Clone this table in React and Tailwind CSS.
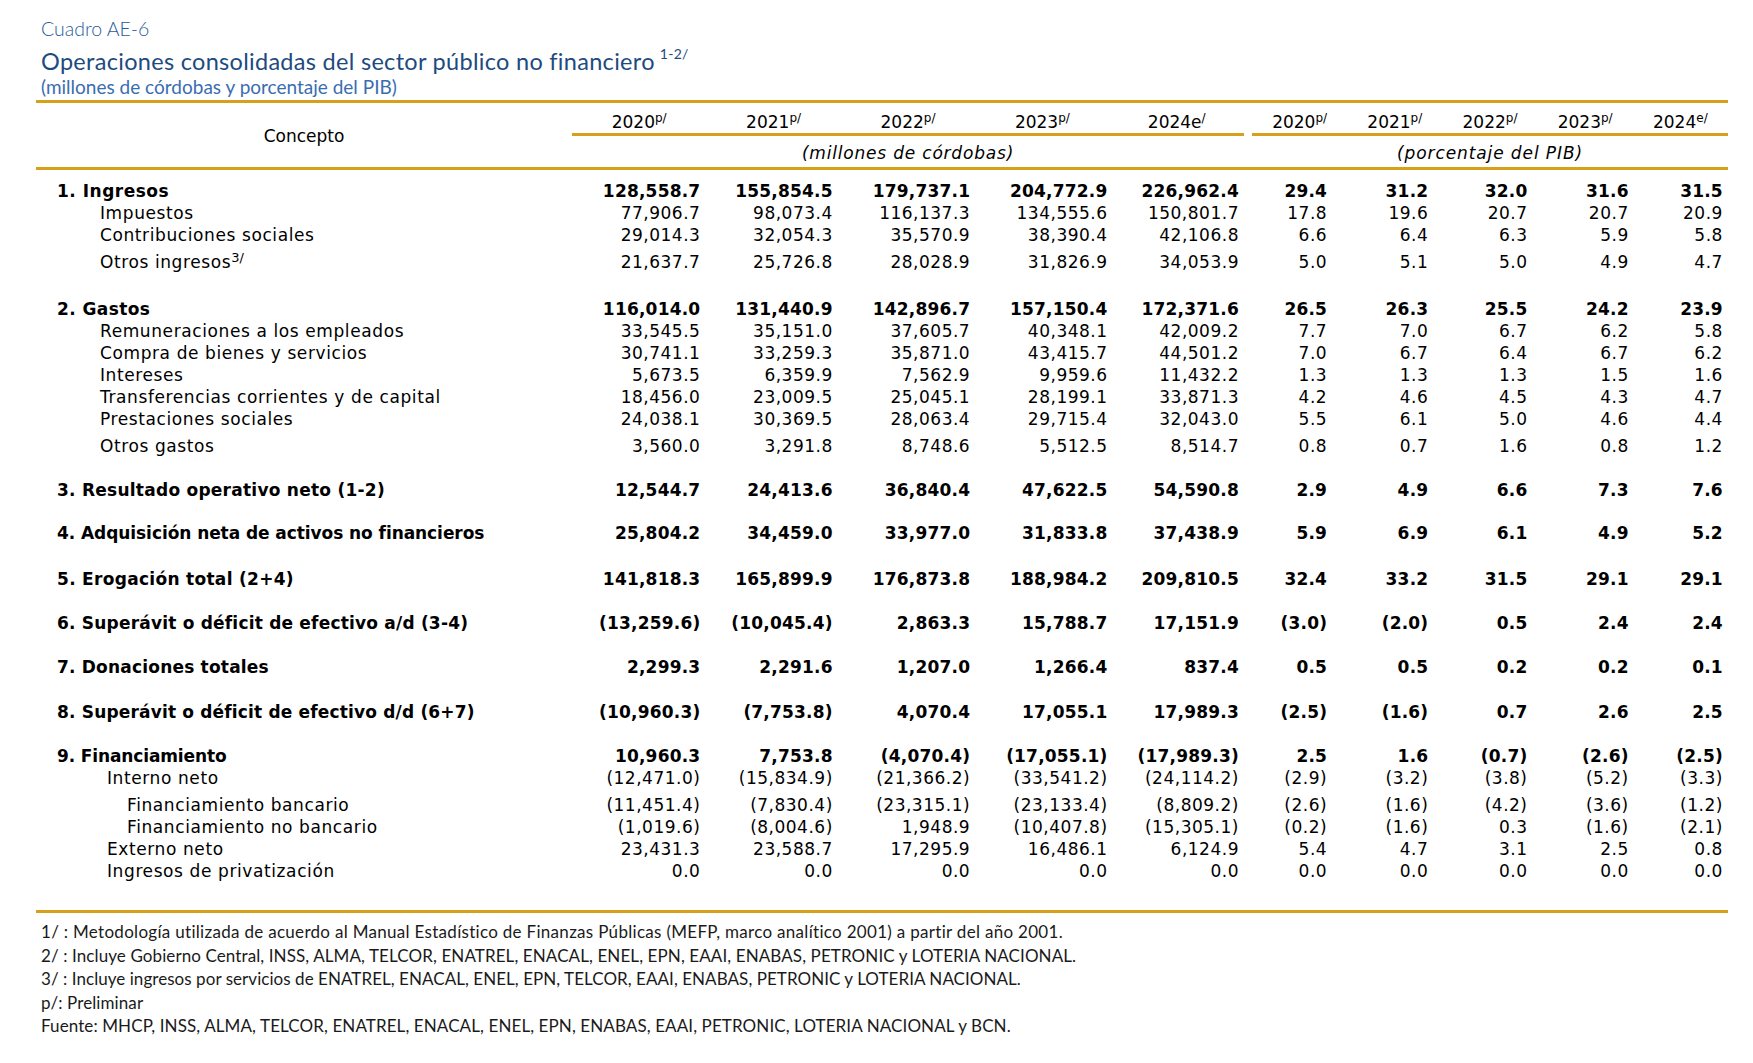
import React from 'react';

// Columnas: concepto | 5 millones | separador | 5 porcentaje
const GRID = 'grid grid-cols-[536px_repeat(5,134.4px)_8px_repeat(5,95.2px)]';
const MILL_PAD = ['pr-[6px]', 'pr-[8px]', 'pr-[5px]', 'pr-[2px]', 'pr-[5px]'];
const PCT_PAD = ['pr-[20px]', 'pr-[14px]', 'pr-[10px]', 'pr-[4px]', 'pr-[5px]'];

const ROWS = [
  { gap: 'h-[10px]' },
  { label: '1. Ingresos', ind: 'pl-[21px]', bold: true, tr: 'tracking-[0.5px]', m: ['128,558.7', '155,854.5', '179,737.1', '204,772.9', '226,962.4'], p: ['29.4', '31.2', '32.0', '31.6', '31.5'] },
  { label: 'Impuestos', ind: 'pl-[64px]', m: ['77,906.7', '98,073.4', '116,137.3', '134,555.6', '150,801.7'], p: ['17.8', '19.6', '20.7', '20.7', '20.9'] },
  { label: 'Contribuciones sociales', ind: 'pl-[64px]', m: ['29,014.3', '32,054.3', '35,570.9', '38,390.4', '42,106.8'], p: ['6.6', '6.4', '6.3', '5.9', '5.8'] },
  { label: 'Otros ingresos', sup: '3/', ind: 'pl-[64px]', h: 'h-[27px]', m: ['21,637.7', '25,726.8', '28,028.9', '31,826.9', '34,053.9'], p: ['5.0', '5.1', '5.0', '4.9', '4.7'] },
  { gap: 'h-[24px]' },
  { label: '2. Gastos', ind: 'pl-[21px]', bold: true, tr: 'tracking-[0.4px]', h: 'h-[23px]', m: ['116,014.0', '131,440.9', '142,896.7', '157,150.4', '172,371.6'], p: ['26.5', '26.3', '25.5', '24.2', '23.9'] },
  { label: 'Remuneraciones a los empleados', ind: 'pl-[64px]', m: ['33,545.5', '35,151.0', '37,605.7', '40,348.1', '42,009.2'], p: ['7.7', '7.0', '6.7', '6.2', '5.8'] },
  { label: 'Compra de bienes y servicios', ind: 'pl-[64px]', m: ['30,741.1', '33,259.3', '35,871.0', '43,415.7', '44,501.2'], p: ['7.0', '6.7', '6.4', '6.7', '6.2'] },
  { label: 'Intereses', ind: 'pl-[64px]', m: ['5,673.5', '6,359.9', '7,562.9', '9,959.6', '11,432.2'], p: ['1.3', '1.3', '1.3', '1.5', '1.6'] },
  { label: 'Transferencias corrientes y de capital', ind: 'pl-[64px]', m: ['18,456.0', '23,009.5', '25,045.1', '28,199.1', '33,871.3'], p: ['4.2', '4.6', '4.5', '4.3', '4.7'] },
  { label: 'Prestaciones sociales', ind: 'pl-[64px]', m: ['24,038.1', '30,369.5', '28,063.4', '29,715.4', '32,043.0'], p: ['5.5', '6.1', '5.0', '4.6', '4.4'] },
  { label: 'Otros gastos', ind: 'pl-[64px]', h: 'h-[27px]', m: ['3,560.0', '3,291.8', '8,748.6', '5,512.5', '8,514.7'], p: ['0.8', '0.7', '1.6', '0.8', '1.2'] },
  { gap: 'h-[22px]' },
  { label: '3. Resultado operativo neto (1-2)', ind: 'pl-[21px]', bold: true, tr: 'tracking-[0.25px]', m: ['12,544.7', '24,413.6', '36,840.4', '47,622.5', '54,590.8'], p: ['2.9', '4.9', '6.6', '7.3', '7.6'] },
  { gap: 'h-[21px]' },
  { label: '4. Adquisición neta de activos no financieros', ind: 'pl-[21px]', bold: true, tr: 'tracking-[-0.07px]', m: ['25,804.2', '34,459.0', '33,977.0', '31,833.8', '37,438.9'], p: ['5.9', '6.9', '6.1', '4.9', '5.2'] },
  { gap: 'h-[24px]' },
  { label: '5. Erogación total (2+4)', ind: 'pl-[21px]', bold: true, tr: 'tracking-[0.3px]', m: ['141,818.3', '165,899.9', '176,873.8', '188,984.2', '209,810.5'], p: ['32.4', '33.2', '31.5', '29.1', '29.1'] },
  { gap: 'h-[22px]' },
  { label: '6. Superávit o déficit de efectivo a/d (3-4)', ind: 'pl-[21px]', bold: true, m: ['(13,259.6)', '(10,045.4)', '2,863.3', '15,788.7', '17,151.9'], p: ['(3.0)', '(2.0)', '0.5', '2.4', '2.4'] },
  { gap: 'h-[22px]' },
  { label: '7. Donaciones totales', ind: 'pl-[21px]', bold: true, m: ['2,299.3', '2,291.6', '1,207.0', '1,266.4', '837.4'], p: ['0.5', '0.5', '0.2', '0.2', '0.1'] },
  { gap: 'h-[23px]' },
  { label: '8. Superávit o déficit de efectivo d/d (6+7)', ind: 'pl-[21px]', bold: true, tr: 'tracking-[0.17px]', m: ['(10,960.3)', '(7,753.8)', '4,070.4', '17,055.1', '17,989.3'], p: ['(2.5)', '(1.6)', '0.7', '2.6', '2.5'] },
  { gap: 'h-[22px]' },
  { label: '9. Financiamiento', ind: 'pl-[21px]', bold: true, tr: 'tracking-[-0.13px]', m: ['10,960.3', '7,753.8', '(4,070.4)', '(17,055.1)', '(17,989.3)'], p: ['2.5', '1.6', '(0.7)', '(2.6)', '(2.5)'] },
  { label: 'Interno neto', ind: 'pl-[71px]', m: ['(12,471.0)', '(15,834.9)', '(21,366.2)', '(33,541.2)', '(24,114.2)'], p: ['(2.9)', '(3.2)', '(3.8)', '(5.2)', '(3.3)'] },
  { label: 'Financiamiento bancario', ind: 'pl-[91px]', h: 'h-[27px]', m: ['(11,451.4)', '(7,830.4)', '(23,315.1)', '(23,133.4)', '(8,809.2)'], p: ['(2.6)', '(1.6)', '(4.2)', '(3.6)', '(1.2)'] },
  { label: 'Financiamiento no bancario', ind: 'pl-[91px]', m: ['(1,019.6)', '(8,004.6)', '1,948.9', '(10,407.8)', '(15,305.1)'], p: ['(0.2)', '(1.6)', '0.3', '(1.6)', '(2.1)'] },
  { label: 'Externo neto', ind: 'pl-[71px]', m: ['23,431.3', '23,588.7', '17,295.9', '16,486.1', '6,124.9'], p: ['5.4', '4.7', '3.1', '2.5', '0.8'] },
  { label: 'Ingresos de privatización', ind: 'pl-[71px]', m: ['0.0', '0.0', '0.0', '0.0', '0.0'], p: ['0.0', '0.0', '0.0', '0.0', '0.0'] },
];

const YEARS_M = [
  { y: '2020', s: 'p/' },
  { y: '2021', s: 'p/' },
  { y: '2022', s: 'p/' },
  { y: '2023', s: 'p/' },
  { y: '2024e', s: '/' },
];
const YEARS_P = [
  { y: '2020', s: 'p/' },
  { y: '2021', s: 'p/' },
  { y: '2022', s: 'p/' },
  { y: '2023', s: 'p/' },
  { y: '2024', s: 'e/' },
];

// Notas al pie, con ajuste de espaciado por línea
const NOTES = [
  { t: '1/ : Metodología utilizada de acuerdo al Manual Estadístico de Finanzas Públicas (MEFP, marco analítico 2001) a partir del año 2001.', tr: 'tracking-[0.3px]' },
  { t: '2/ : Incluye Gobierno Central, INSS, ALMA, TELCOR, ENATREL, ENACAL, ENEL, EPN, EAAI, ENABAS, PETRONIC y LOTERIA NACIONAL.', tr: 'tracking-[0.1px]' },
  { t: '3/ : Incluye ingresos por servicios de ENATREL, ENACAL, ENEL, EPN, TELCOR, EAAI, ENABAS, PETRONIC y LOTERIA NACIONAL.', tr: 'tracking-[0.05px]' },
  { t: 'p/: Preliminar', tr: 'tracking-[0.1px]' },
  { t: 'Fuente: MHCP, INSS, ALMA, TELCOR, ENATREL, ENACAL, ENEL, EPN, ENABAS, EAAI, PETRONIC, LOTERIA NACIONAL y BCN.', tr: 'tracking-[0.1px]' },
];

function Row({ row }) {
  if (row.gap) return <div className={row.gap} />;
  const weight = row.bold ? 'font-bold tracking-[0.2px]' : 'font-normal tracking-[0.5px]';
  const labelTr = row.bold ? row.tr || '' : 'tracking-[0.6px]';
  return (
    <div className={`${GRID} ${row.h || 'h-[22px]'} items-end ${weight}`}>
      <div className={`${row.ind} leading-[22px] whitespace-nowrap ${labelTr}`}>
        {row.label}
        {row.sup && <sup className="text-[13px] tracking-normal">{row.sup}</sup>}
      </div>
      {row.m.map((v, i) => (
        <div key={'m' + i} className={`text-right leading-[22px] ${MILL_PAD[i]}`}>{v}</div>
      ))}
      <div />
      {row.p.map((v, i) => (
        <div key={'p' + i} className={`text-right leading-[22px] ${PCT_PAD[i]}`}>{v}</div>
      ))}
    </div>
  );
}

export default function App() {
  return (
    <div className="w-[1753px] h-[1063px] bg-white overflow-hidden pl-[36px] pt-[18px]">
      {/* Encabezado */}
      <div className="pl-[5px] font-['Lato',sans-serif]">
        <div className="text-[19.5px] leading-[22px] font-light text-[#2a5c9a]">Cuadro AE-6</div>
        <div className="mt-[6px] text-[23.5px] leading-[30px] text-[#1d4b80] tracking-[0.3px]">
          Operaciones consolidadas del sector público no financiero
          <sup className="text-[14px] ml-[5px] top-[-0.8em]">1-2/</sup>
        </div>
        <div className="text-[19px] leading-[21px] text-[#3a6db0]">(millones de córdobas y porcentaje del PIB)</div>
      </div>

      <div className="w-[1692px] mt-[3px] font-['DejaVu_Sans','Verdana',sans-serif] text-[17px] text-black">
        <div className="h-[3px] bg-[#d7a01a]" />

        {/* Cabecera de la tabla */}
        <div className="flex h-[64px]">
          <div className="w-[536px] flex items-center justify-center pt-[4px]">Concepto</div>
          <div className="w-[672px] flex flex-col">
            <div className="h-[30px] flex items-end">
              {YEARS_M.map((y) => (
                <div key={y.y} className="w-[134.4px] text-center leading-[22px]">
                  {y.y}
                  <sup className="text-[12px]">{y.s}</sup>
                </div>
              ))}
            </div>
            <div className="h-[3px] bg-[#d7a01a]" />
            <div className="flex-1 flex items-center justify-center italic tracking-[0.8px] pt-[4px]">(millones de córdobas)</div>
          </div>
          <div className="w-[8px]" />
          <div className="w-[476px] flex flex-col">
            <div className="h-[30px] flex items-end">
              {YEARS_P.map((y) => (
                <div key={y.y} className="w-[95.2px] text-center leading-[22px]">
                  {y.y}
                  <sup className="text-[12px]">{y.s}</sup>
                </div>
              ))}
            </div>
            <div className="h-[3px] bg-[#d7a01a]" />
            <div className="flex-1 flex items-center justify-center italic tracking-[0.9px] pt-[4px]">(porcentaje del PIB)</div>
          </div>
        </div>
        <div className="h-[3px] bg-[#d7a01a]" />

        {/* Cuerpo */}
        {ROWS.map((r, i) => (
          <Row key={i} row={r} />
        ))}

        <div className="h-[28px]" />
        <div className="h-[3px] bg-[#d7a01a]" />

        {/* Notas */}
        <div className="mt-[7px] pl-[5px] font-['Lato',sans-serif] text-[17px] leading-[23.5px] text-[#1a1a1a]">
          {NOTES.map((n) => (
            <div key={n.t} className={n.tr}>{n.t}</div>
          ))}
        </div>
      </div>
    </div>
  );
}
